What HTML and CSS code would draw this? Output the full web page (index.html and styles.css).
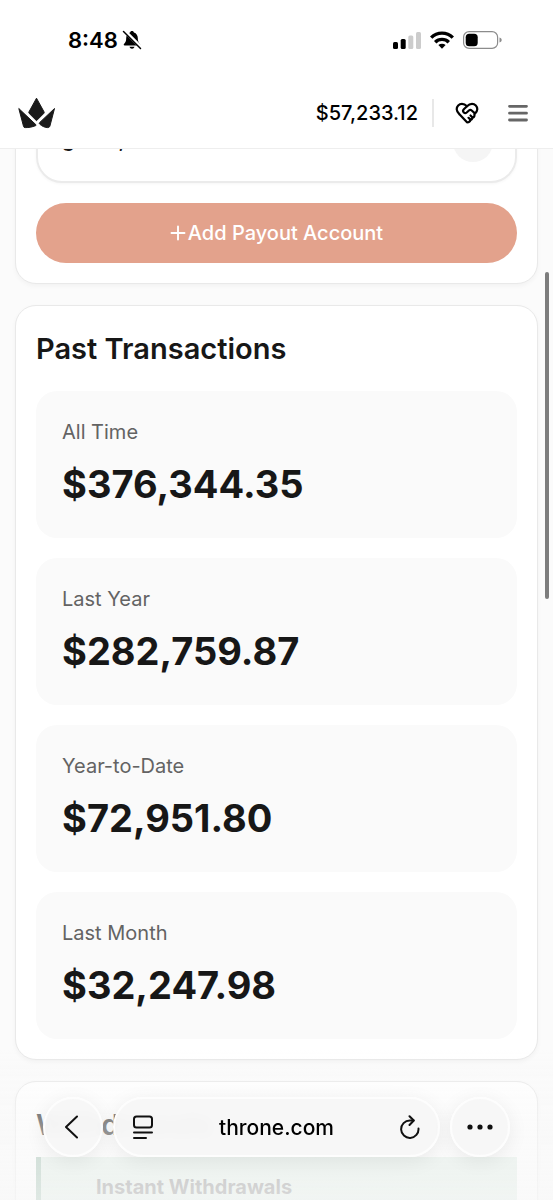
FILE: index.html
```
<!DOCTYPE html>
<html lang="en">
<head>
    <meta charset="UTF-8">
    <meta name="viewport" content="width=device-width, initial-scale=1.0">
    <title>Throne</title>
    <link rel="stylesheet" href="styles.css">
</head>
<body>
    <div class="page">
        <header class="header">
            <div class="status-bar">
                <div class="status-time">
                    <span>8:48</span>
                    <svg width="20" height="20" viewBox="0 0 20 20">
                        <path d="M10 1c1 0 1.700.6 1.900 1.400C14.500 3.200 15.800 5.400 15.800 8c0 3 .6 4.300 2.200 6 .6.700.2 1.500-.6 1.500H2.600c-.8 0-1.200-.8-.6-1.500C3.600 12.300 4.200 11 4.200 8c0-2.600 1.300-4.800 3.900-5.600C8.300 1.600 9 1 10 1z"/>
                        <path d="M7.500 16.800h5c-.3 1.200-1.300 1.900-2.500 1.900s-2.200-.7-2.500-1.900z"/>
                        <path d="M2.200 .6L19.600 18" stroke="#fff" stroke-width="3.600"/>
                        <path d="M1.500 1.500L18.500 18.500" stroke="#000" stroke-width="1.500" stroke-linecap="round"/>
                    </svg>
                </div>
                <div class="status-icons">
                    <svg width="28" height="18" viewBox="0 0 28 18">
                        <rect x="0" y="11" width="5" height="7" rx="1.500"/>
                        <rect x="7.700" y="8" width="5" height="10" rx="1.500"/>
                        <rect x="15.300" y="4.500" width="5" height="13.500" rx="1.500" fill="#ccc"/>
                        <rect x="23" y="1" width="5" height="17" rx="1.500" fill="#ccc"/>
                    </svg>
                    <svg width="24" height="18" viewBox="0 0 24 18" fill="none" stroke="#000" stroke-width="3.400">
                        <path d="M1.200 6.600a15.300 15.300 0 0 1 21.600 0"/>
                        <path d="M5.200 11.200a9.600 9.600 0 0 1 13.600 0"/>
                        <path d="M12 17.800l-3.600-3.700a5.200 5.200 0 0 1 7.200 0z" fill="#000" stroke="none"/>
                    </svg>
                    <svg width="39" height="18" viewBox="0 0 39 18">
                        <rect x=".6" y=".6" width="34" height="16.800" rx="5.500" fill="none" stroke="#8c8c8c" stroke-width="1.200"/>
                        <rect x="2.700" y="2.700" width="12" height="12.600" rx="3.500"/>
                        <path d="M36.500 6.500c1.600.5 2.200 1.400 2.200 2.500s-.6 2-2.200 2.500z" fill="#8c8c8c"/>
                    </svg>
                </div>
            </div>
            <nav class="nav">
                <a href="#" class="logo" aria-label="Throne">
                    <svg width="38" height="32" viewBox="0 0 38 32" fill="#1a1a1a" stroke="#1a1a1a" stroke-linejoin="round">
                        <path d="M18.500 1.200L26 14.800c.4.700.2 1.100-.2 1.600L18.500 23.700 11.200 16.400c-.4-.5-.6-.9-.2-1.600z"/>
                        <path d="M.8 11.500L17.800 27.600c.5.500.3.900-.3 1.100-3.300 1.300-6.700 2-10.300 1.900-1 0-1.500-.4-1.700-1.300z"/>
                        <path d="M36.500 11.500L21.800 25.400c-.8.700-.6 1.300.1 1.900 1.900 1.700 4.400 3 7.300 3.300 1.400.1 2.300-.3 2.700-1.500z"/>
                    </svg>
                </a>
                <div class="nav-right">
                    <a href="#" class="balance">$57,233.12</a>
                    <button class="nav-button" aria-label="Gifts">
                        <svg width="24" height="24" viewBox="0 0 24 24" fill="none" stroke="#000" stroke-width="2.200" stroke-linecap="round" stroke-linejoin="round">
                            <path d="M19.400 13.400C21 11.900 22.300 10.400 22.300 8.300a5.300 5.300 0 0 0-5.300-5.500c-1.800 0-3.200.6-5 2.400-1.800-1.800-3.200-2.400-5-2.400a5.300 5.300 0 0 0-5.300 5.500c0 2.300 1.400 3.800 3 5.300l7.300 7.700 1.500-.1c1.500-.6 1.900-1.600 1.800-2.500 1.200.1 2.200-.9 2.100-2.100 1.200 0 2.500-1.100 2-3.200z"/>
                            <path d="M12 5.200L8.800 8.300a2.200 2.200 0 0 0 0 3.100c.8.800 2 .8 2.900.1l2.200-2c.8-.7 2-.7 2.800 0l2.900 2.600"/>
                            <path d="M15.200 18.400L13.500 16.800M17.300 16.200L15.500 14.500"/>
                        </svg>
                    </button>
                    <button class="nav-button" aria-label="Menu">
                        <svg width="20" height="18" viewBox="0 0 20 18" stroke="#666" stroke-width="2.800" stroke-linecap="round">
                            <path d="M1.500 2.300h17M1.500 9.200h17M1.500 16h17"/>
                        </svg>
                    </button>
                </div>
            </nav>
        </header>

        <main class="content">
            <section class="card">
                <div class="account">
                    <div class="account-name"><span>g</span><span>,</span></div>
                    <span class="account-dot"></span>
                </div>
                <button class="add-button">
                    <svg width="16" height="16" viewBox="0 0 16 16" stroke="#fff" stroke-width="1.900" stroke-linecap="round">
                        <path d="M8 1.500v13M1.500 8h13"/>
                    </svg>
                    Add Payout Account
                </button>
            </section>

            <section class="card">
                <h2 class="card-title">Past Transactions</h2>
                <div class="stats">
                    <div class="stat">
                        <div class="stat-label">All Time</div>
                        <div class="stat-value">$376,344.35</div>
                    </div>
                    <div class="stat">
                        <div class="stat-label">Last Year</div>
                        <div class="stat-value">$282,759.87</div>
                    </div>
                    <div class="stat">
                        <div class="stat-label">Year-to-Date</div>
                        <div class="stat-value">$72,951.80</div>
                    </div>
                    <div class="stat">
                        <div class="stat-label">Last Month</div>
                        <div class="stat-value">$32,247.98</div>
                    </div>
                </div>
            </section>

            <section class="card withdrawals">
                <h2 class="card-title">Withdrawals</h2>
                <div class="notice">Instant Withdrawals</div>
            </section>
        </main>

        <div class="scroll-thumb"></div>
        <div class="bottom-fade"></div>

        <!-- browser toolbar -->
        <div class="toolbar">
            <button class="round-button" aria-label="Back">
                <svg width="16" height="24" viewBox="0 0 16 24" fill="none" stroke="#111" stroke-width="2" stroke-linecap="round" stroke-linejoin="round">
                    <path d="M12 1.500L1 12l11 10.500"/>
                </svg>
            </button>
            <div class="address">
                <button class="icon-button" aria-label="Page menu">
                    <svg width="20" height="24" viewBox="0 0 20 24" fill="none" stroke="#111" stroke-width="2" stroke-linecap="round">
                        <rect x="1" y="1.500" width="18" height="11" rx="2.500"/>
                        <path d="M1 17.500h18M1 23h12"/>
                    </svg>
                </button>
                <a href="#" class="address-text">throne.com</a>
                <button class="icon-button" aria-label="Reload">
                    <svg width="20" height="24" viewBox="0 0 20 24" fill="none" stroke="#111" stroke-width="2" stroke-linecap="round" stroke-linejoin="round">
                        <path d="M18.500 13.500A8.700 8.700 0 1 1 9.800 5.500H13.500"/>
                        <path d="M9.500 1.200l4.300 4.300-4.300 4.500"/>
                    </svg>
                </button>
            </div>
            <button class="round-button" aria-label="More">
                <svg width="26" height="6" viewBox="0 0 26 6" fill="#111">
                    <circle cx="3" cy="3" r="2.600"/>
                    <circle cx="13" cy="3" r="2.600"/>
                    <circle cx="23" cy="3" r="2.600"/>
                </svg>
            </button>
        </div>
    </div>
</body>
</html>
```
FILE: styles.css
```
* {
    box-sizing: border-box;
}
body {
    margin: 0;
    background: #fbfbfb;
    color: #171717;
    font-family: Inter, "Liberation Sans", sans-serif;
}
button {
    border: none;
    background: none;
    padding: 0;
    font-family: inherit;
    cursor: pointer;
}
a {
    color: inherit;
    text-decoration: none;
}
svg {
    display: block;
    flex-shrink: 0;
}
.page {
    position: relative;
    height: 100vh;
    overflow: hidden;
}

/* Header */
.header {
    position: fixed;
    top: 0;
    left: 0;
    right: 0;
    z-index: 2;
    background: #fff;
    border-bottom: 1px solid #eee;
}
.status-bar {
    display: flex;
    justify-content: space-between;
    align-items: center;
    height: 80px;
    padding: 0 51px 0 68px;
    color: #000;
}
.status-time {
    display: flex;
    align-items: center;
    gap: 4px;
    font-size: 22px;
    font-weight: 600;
}
.status-icons {
    display: flex;
    align-items: center;
    gap: 9px;
}
.nav {
    display: flex;
    justify-content: space-between;
    align-items: center;
    height: 66px;
    margin-bottom: 2px;
    padding: 0 25px 0 18px;
}
.nav-right {
    display: flex;
    align-items: center;
    color: #000;
}
.balance {
    padding-right: 14px;
    border-right: 2px solid #e8e8e8;
    font-size: 20px;
    font-weight: 500;
    line-height: 28px;
}
.nav-button {
    margin-left: 21px;
}
.nav-button + .nav-button {
    margin-left: 29px;
}

/* Cards */
.content {
    display: flex;
    flex-direction: column;
    gap: 21px;
    padding: 80px 15px 0;
}
.card {
    flex-shrink: 0;
    padding: 20px;
    background: #fff;
    border: 1px solid #e9e9e9;
    border-radius: 21px;
    box-shadow: 0 2px 5px rgba(0, 0, 0, 0.04);
}
.account {
    display: flex;
    justify-content: space-between;
    align-items: center;
    height: 82px;
    padding: 0 22px 0 24px;
    border: 2px solid #ebebeb;
    border-radius: 26px;
    box-shadow: 0 1px 3px rgba(0, 0, 0, 0.04);
}
.account-name {
    display: flex;
    gap: 44px;
    padding-bottom: 4px;
    font-size: 20px;
    font-weight: 600;
    line-height: 28px;
}
.account-dot {
    width: 40px;
    height: 40px;
    border-radius: 50%;
    background: #f5f5f5;
}
.add-button {
    display: flex;
    justify-content: center;
    align-items: center;
    gap: 2px;
    width: 100%;
    height: 60px;
    margin-top: 20px;
    border-radius: 30px;
    background: #e3a28c;
    color: #fff;
    font-size: 20px;
    font-weight: 500;
}
.card-title {
    margin: 0 0 19px;
    font-size: 29px;
    font-weight: 600;
    line-height: 46px;
}
.stats {
    display: flex;
    flex-direction: column;
    gap: 20px;
}
.stat {
    padding: 26px;
    border-radius: 21px;
    background: #fafafa;
}
.stat-label {
    color: #636363;
    font-size: 20px;
    line-height: 31px;
}
.stat-value {
    margin-top: 8px;
    font-size: 38px;
    font-weight: 700;
    line-height: 56px;
}
.withdrawals .card-title {
    margin-bottom: 9px;
}
.notice {
    padding: 15px 55px 60px;
    border-left: 5px solid #94b8a6;
    background: #dcebe2;
    color: #777;
    font-size: 20px;
    font-weight: 700;
    line-height: 31px;
}

/* Overlays */
.scroll-thumb {
    position: fixed;
    top: 272px;
    right: 4px;
    width: 4px;
    height: 327px;
    border-radius: 2px;
    background: #7d7d7d;
}
.bottom-fade {
    position: fixed;
    left: 0;
    right: 0;
    bottom: 0;
    height: 150px;
    background: linear-gradient(rgba(248, 248, 248, 0), rgba(248, 248, 248, 0.55) 50%, rgba(248, 248, 248, 0.75));
}
.toolbar {
    position: fixed;
    left: 0;
    right: 0;
    bottom: 43px;
    display: flex;
    gap: 10px;
    padding: 0 43px;
}
.round-button,
.address {
    height: 60px;
    border: 2px solid #fdfdfd;
    border-radius: 30px;
    background: rgba(247, 247, 247, 0.95);
    backdrop-filter: blur(6px);
    box-shadow: 0 4px 20px rgba(0, 0, 0, 0.07);
}
.round-button {
    display: flex;
    justify-content: center;
    align-items: center;
    flex-shrink: 0;
    width: 60px;
}
.address {
    display: flex;
    justify-content: space-between;
    align-items: center;
    flex: 1;
    padding: 0 18px;
}
.address-text {
    color: #000;
    font-size: 21px;
    font-weight: 500;
}
```
